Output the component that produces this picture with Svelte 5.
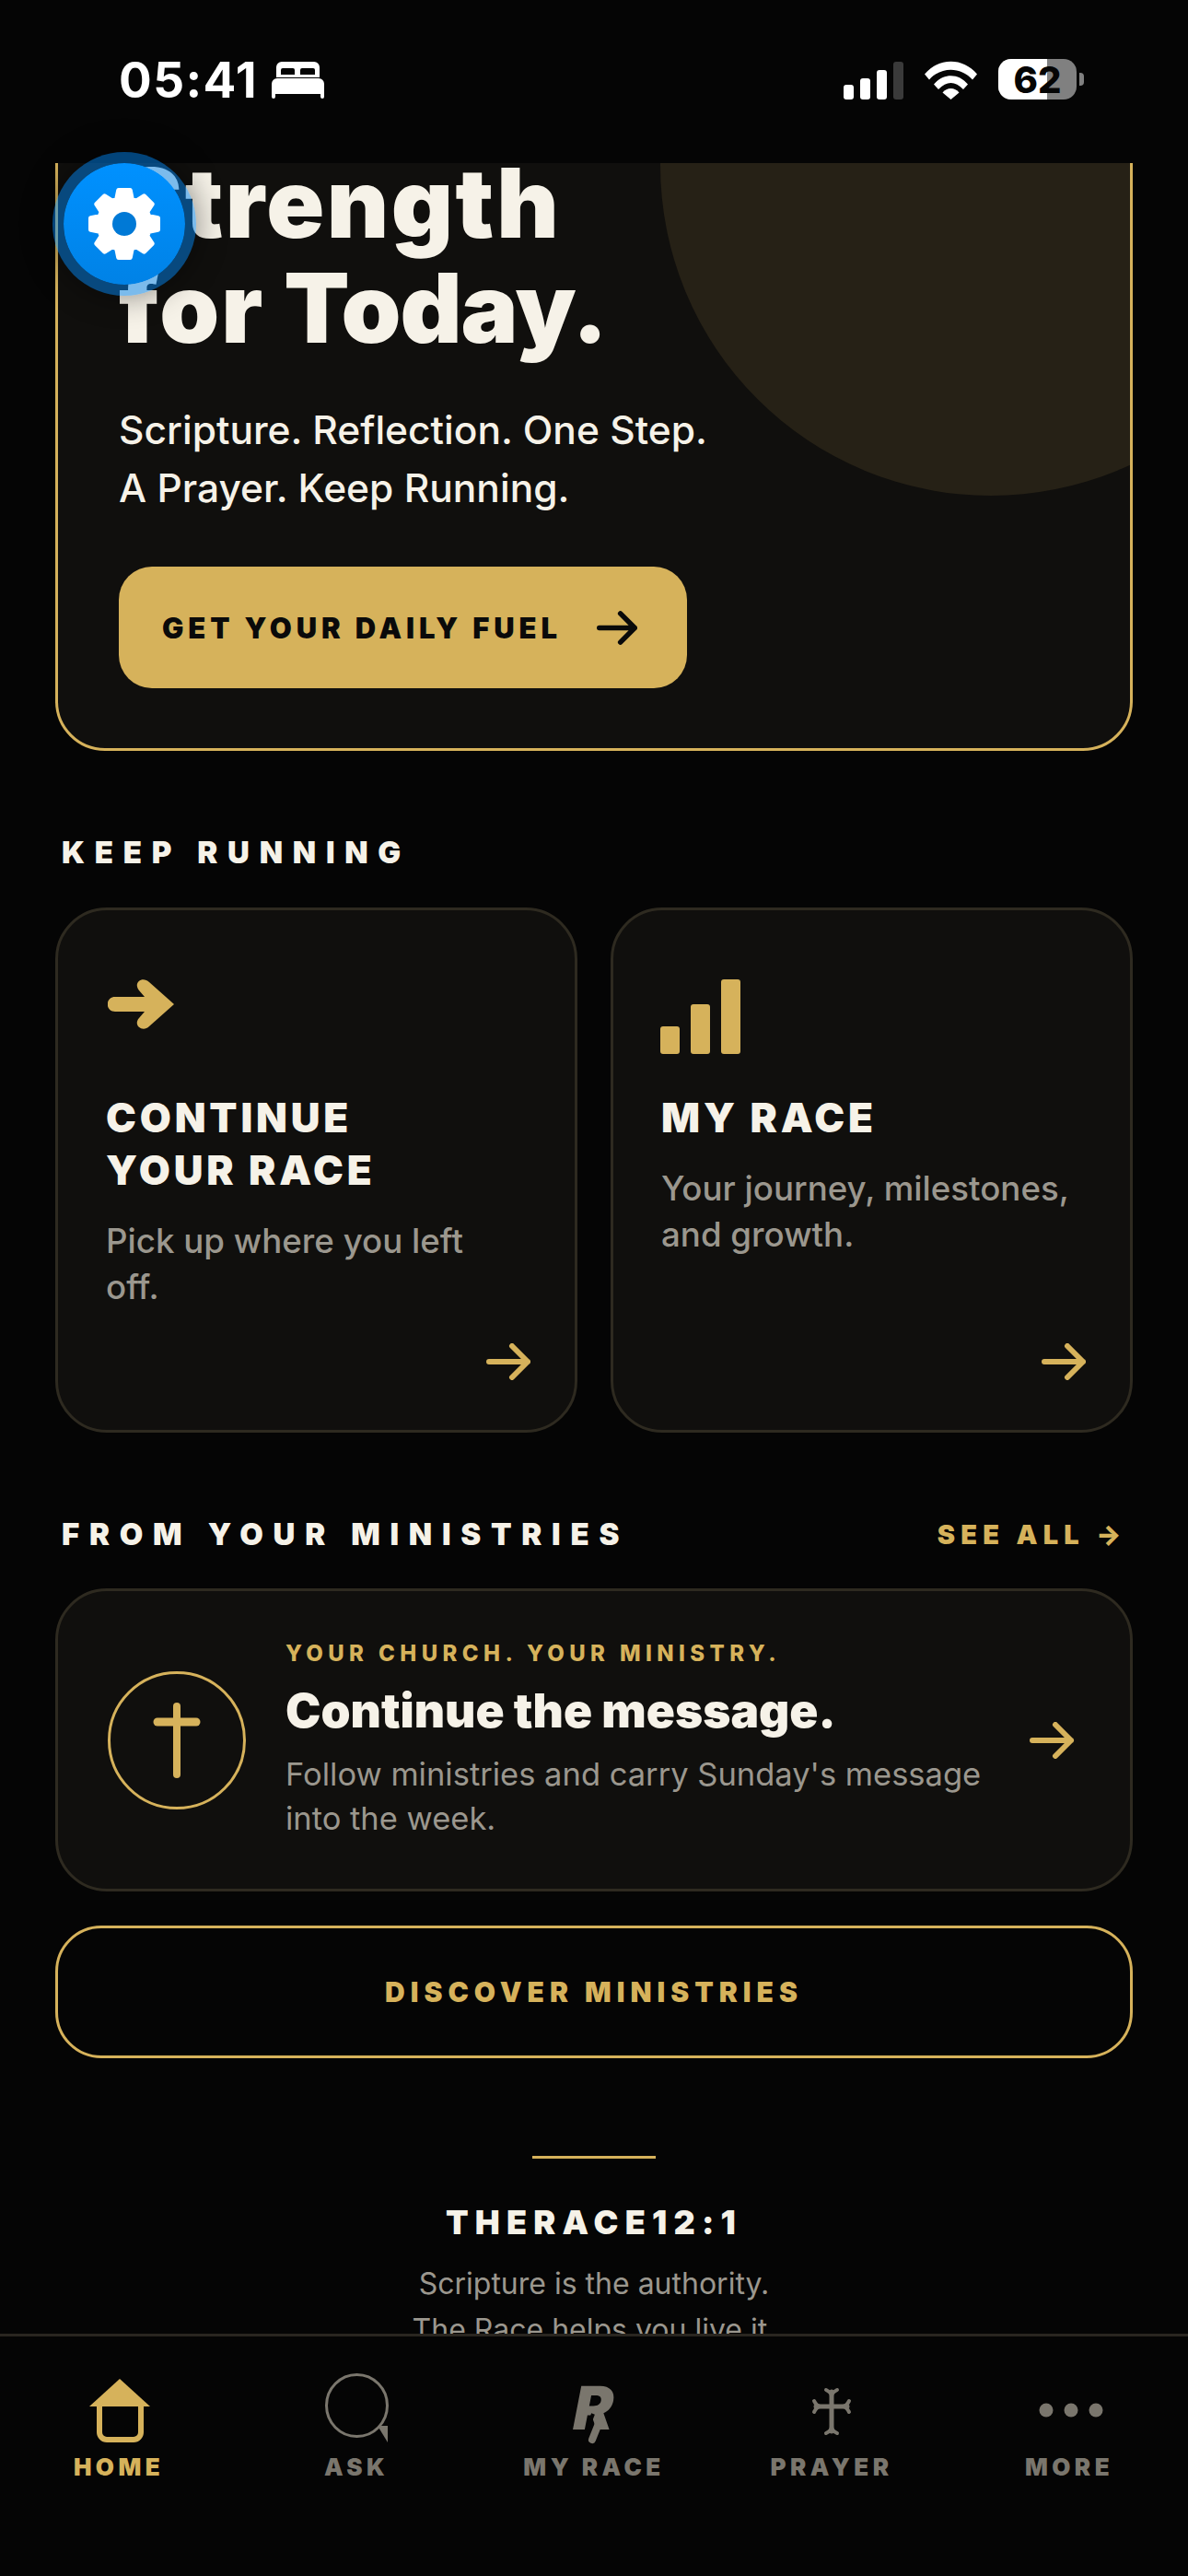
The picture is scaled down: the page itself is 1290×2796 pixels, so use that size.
<script lang="ts">
  const tabs = [
    { id: 'home', label: 'HOME', active: true },
    { id: 'ask', label: 'ASK' },
    { id: 'race', label: 'MY RACE' },
    { id: 'prayer', label: 'PRAYER' },
    { id: 'more', label: 'MORE' },
  ];

  // 8-tooth gear outline for the floating settings button
  function gearPath(cx: number, cy: number, outer: number, root: number): string {
    const pts: string[] = [];
    for (let i = 0; i < 8; i++) {
      const a = (i * Math.PI) / 4 - Math.PI / 2;
      const steps: [number, number][] = [
        [root, -0.3],
        [outer, -0.17],
        [outer, 0.17],
        [root, 0.3],
      ];
      for (const [r, d] of steps) {
        pts.push(`${(cx + r * Math.cos(a + d)).toFixed(1)} ${(cy + r * Math.sin(a + d)).toFixed(1)}`);
      }
    }
    return 'M' + pts.join('L') + 'Z';
  }
</script>

{#snippet arrow(cls: string)}
  <svg class={cls} viewBox="0 0 48 40" fill="none" stroke="currentColor" stroke-width="6" stroke-linecap="round" stroke-linejoin="round">
    <path d="M3 20H45M28 3l17 17-17 17" />
  </svg>
{/snippet}

<div class="phone">
  <header class="status">
    <div class="status-left">
      <span class="time">05:41</span>
      <svg class="bed" viewBox="0 0 57 40" fill="#fff">
        <path fill-rule="evenodd" d="M5 17V6a6 6 0 0 1 6-6h35a6 6 0 0 1 6 6v11H5ZM10 14h15V9a2 2 0 0 0-2-2H12a2 2 0 0 0-2 2ZM31 14h16V9a2 2 0 0 0-2-2H33a2 2 0 0 0-2 2Z" />
        <path d="M0 24a6 6 0 0 1 6-6h45a6 6 0 0 1 6 6v14a2 2 0 0 1-4 0v-3H4v3a2 2 0 0 1-4 0Z" />
      </svg>
    </div>
    <div class="status-right">
      <svg class="signal" viewBox="0 0 65 41">
        <rect x="0" y="25" width="11" height="16" rx="3" fill="#fff" />
        <rect x="18" y="18" width="11" height="23" rx="3" fill="#fff" />
        <rect x="36" y="9" width="11" height="32" rx="3" fill="#fff" />
        <rect x="54" y="0" width="11" height="41" rx="3" fill="#3a3a3a" />
      </svg>
      <svg class="wifi" viewBox="0 0 57 42" fill="#fff">
        <path d="M0 14.500C15-4 42-4 57 14.500L52 20.500C39 6 18 6 5 20.500Z" />
        <path d="M10 25.500C20 13 37 13 47 25.500L42 31C33 21.500 24 21.500 15 31Z" />
        <path d="M19.500 34.500C24 28.500 33 28.500 37.500 34.500L28.500 42Z" />
      </svg>
      <div class="battery">
        <div class="battery-body">
          <span class="battery-fill"></span>
          <span class="battery-num">62</span>
        </div>
        <span class="battery-cap"></span>
      </div>
    </div>
  </header>

  <main class="scroller">
    <section class="hero">
      <div class="hero-glow"></div>
      <h1><span class="wide">Strength</span><br /><span class="for">for</span> <span class="today">Today.</span></h1>
      <p class="hero-sub">Scripture. Reflection. One Step.<br />A Prayer. Keep Running.</p>
      <button class="hero-btn">
        <span>GET YOUR DAILY FUEL</span>
        {@render arrow('hero-arrow')}
      </button>
    </section>

    <h2 class="section-title keep">KEEP RUNNING</h2>
    <div class="cards">
      <article class="card">
        <svg class="card-icon" viewBox="0 0 72 54" fill="#d6b25b">
          <path d="M8 19H40L34 12C27 3 38-4 45 3L72 27 45 51C38 58 27 50 34 42L40 35H8C-3 35-3 19 8 19Z" />
        </svg>
        <h3>CONTINUE<br />YOUR RACE</h3>
        <p>Pick up where you left off.</p>
        {@render arrow('card-arrow')}
      </article>
      <article class="card">
        <svg class="card-icon bars" viewBox="0 0 87 81" fill="#d6b25b">
          <rect x="0" y="51" width="21" height="30" rx="3" />
          <rect x="33" y="27" width="21" height="54" rx="3" />
          <rect x="66" y="0" width="21" height="81" rx="3" />
        </svg>
        <h3>MY RACE</h3>
        <p>Your journey, milestones, and growth.</p>
        {@render arrow('card-arrow')}
      </article>
    </div>

    <div class="section-row">
      <h2 class="section-title">FROM YOUR MINISTRIES</h2>
      <span class="see-all">SEE ALL →</span>
    </div>
    <article class="ministry">
      <div class="cross-ring">
        <svg viewBox="0 0 52 82" fill="none" stroke="#d6b25b" stroke-linecap="round">
          <path d="M26 4V78" stroke-width="8" />
          <path d="M5 21H47" stroke-width="9" />
        </svg>
      </div>
      <div class="ministry-text">
        <span class="eyebrow">YOUR CHURCH. YOUR MINISTRY.</span>
        <h3>Continue the message.</h3>
        <p>Follow ministries and carry Sunday's message into the week.</p>
      </div>
      {@render arrow('ministry-arrow')}
    </article>
    <button class="discover">DISCOVER MINISTRIES</button>

    <footer class="foot">
      <span class="foot-rule"></span>
      <strong>THERACE12:1</strong>
      <p>Scripture is the authority.<br />The Race helps you live it.</p>
    </footer>
  </main>

  <nav class="tabbar">
    {#each tabs as tab (tab.id)}
      <div class="tab" class:active={tab.active}>
        <!-- every icon shares one 88x85 box so the glyphs line up with their labels -->
        <svg class="tab-icon" viewBox="0 0 88 85" fill="none">
          {#if tab.id === 'home'}
            <path d="M45 6L78 36H12Z" fill="currentColor" />
            <path d="M23 34V64a8 8 0 0 0 8 8H60a8 8 0 0 0 8-8V34" stroke="currentColor" stroke-width="6" />
          {:else if tab.id === 'ask'}
            <ellipse cx="44.500" cy="35" rx="33" ry="33.500" stroke="currentColor" stroke-width="3" />
            <path d="M67 57H78V75Z" fill="currentColor" />
          {:else if tab.id === 'race'}
            <text class="r-mark" transform="translate(18 61) skewX(-11)" fill="currentColor">R</text>
            <path d="M43 44L37 60" stroke="#050505" stroke-width="4" />
            <path d="M50 52L42 72" stroke="currentColor" stroke-width="8" stroke-linecap="round" />
          {:else if tab.id === 'prayer'}
            <g stroke="currentColor" stroke-linecap="round" stroke-linejoin="round">
              <path d="M44 20V63M27 36H61" stroke-width="5" />
              <path d="M38 18Q44 21 44 25Q44 21 50 18M38 65Q44 62 44 58Q44 62 50 65M25 30Q28 36 32 36Q28 36 25 42M63 30Q60 36 56 36Q60 36 63 42" stroke-width="4" />
            </g>
          {:else}
            <g fill="currentColor">
              <circle cx="19" cy="40" r="7.500" /><circle cx="46" cy="40" r="7.500" /><circle cx="73" cy="40" r="7.500" />
            </g>
          {/if}
        </svg>
        <span class="tab-label">{tab.label}</span>
      </div>
    {/each}
  </nav>

  <button class="fab" aria-label="Settings">
    <svg viewBox="0 0 84 84">
      <path d={gearPath(42, 42, 37, 28)} fill="#fff" stroke="#fff" stroke-width="5" stroke-linejoin="round" />
      <circle cx="42" cy="42" r="13" fill="#0079d6" />
    </svg>
  </button>
</div>

<style>
  :global(body) {
    background: #050505;
  }
  .phone {
    position: relative;
    width: 1290px;
    height: 2796px;
    display: flex;
    flex-direction: column;
    overflow: hidden;
    background: #050505;
    font-family: Inter, 'Liberation Sans', sans-serif;
    color: #f6f2e8;
  }

  /* status bar */
  .status {
    flex: 0 0 177px;
    box-sizing: border-box;
    padding: 64px 113px 0 129px;
    display: flex;
    justify-content: space-between;
    align-items: flex-start;
  }
  .status-left {
    display: flex;
    align-items: center;
    gap: 15px;
  }
  .time {
    font-size: 53px;
    line-height: 46px;
    font-weight: 700;
    letter-spacing: 1.4px;
    color: #fff;
  }
  .bed {
    width: 57px;
    height: 40px;
  }
  .status-right {
    display: flex;
    align-items: flex-end;
    height: 44px;
  }
  .signal {
    width: 65px;
    height: 41px;
    margin-right: 23px;
  }
  .wifi {
    width: 57px;
    height: 42px;
    margin-right: 23px;
  }
  .battery {
    display: flex;
    align-items: center;
    gap: 3px;
  }
  .battery-body {
    position: relative;
    width: 85px;
    height: 44px;
    border-radius: 14px;
    background: #808080;
    overflow: hidden;
    display: flex;
    align-items: center;
    justify-content: center;
  }
  .battery-fill {
    position: absolute;
    inset: 0 32px 0 0;
    background: #fff;
  }
  .battery-num {
    position: relative;
    font-size: 40px;
    font-weight: 800;
    color: #050505;
  }
  .battery-cap {
    width: 5px;
    height: 14px;
    border-radius: 0 4px 4px 0;
    background: #808080;
  }

  /* scrolled page content */
  .scroller {
    flex: 1;
    min-height: 0;
    overflow: hidden;
    padding: 0 60px;
  }
  .hero {
    position: relative;
    overflow: hidden;
    box-sizing: border-box;
    margin-top: -60px;
    height: 698px;
    padding: 43px 66px 0;
    border: 3px solid #d6b25b;
    border-radius: 54px;
    background: #100f0d;
  }
  .hero-glow {
    position: absolute;
    width: 718px;
    height: 718px;
    right: -208px;
    top: -300px;
    border-radius: 50%;
    background: #262116;
  }
  .hero h1 {
    position: relative;
    margin: 0;
    font-size: 104px;
    line-height: 114px;
    font-weight: 900;
    color: #f6f2e8;
  }
  .hero h1 .wide {
    letter-spacing: 2.500px;
  }
  .hero h1 .for {
    letter-spacing: 2px;
  }
  .hero h1 .today {
    letter-spacing: -1px;
  }
  .hero-sub {
    position: relative;
    margin: 44px 0 0;
    font-size: 42.500px;
    line-height: 63px;
    font-weight: 500;
  }
  .hero-btn {
    position: relative;
    display: flex;
    align-items: center;
    justify-content: space-between;
    margin-top: 54px;
    width: 617px;
    height: 132px;
    padding: 0 54px 0 47px;
    border: 0;
    border-radius: 36px;
    background: #d6b25b;
    color: #0a0a0a;
    font: 900 31px Inter, sans-serif;
    letter-spacing: 0.158em;
    white-space: nowrap;
  }
  :global(.hero-arrow) {
    width: 44px;
    height: 37px;
    flex: none;
  }

  .section-title {
    margin: 0;
    font-size: 33px;
    line-height: 40px;
    font-weight: 900;
    letter-spacing: 0.325em;
    color: #f6f2e8;
  }
  .keep {
    margin: 90px 0 40px 7px;
  }
  .cards {
    display: grid;
    grid-template-columns: 1fr 1fr;
    gap: 36px;
  }
  .card {
    position: relative;
    box-sizing: border-box;
    height: 570px;
    padding: 75px 52px 0;
    border: 3px solid #2e2a20;
    border-radius: 56px;
    background: #100f0d;
    color: #d6b25b;
  }
  .card-icon {
    display: block;
    width: 72px;
    height: 54px;
    margin-left: 2px;
  }
  .card-icon.bars {
    width: 87px;
    height: 81px;
    margin: 0 0 -27px -1px;
  }
  .card h3 {
    margin: 68px 0 0;
    font-size: 44px;
    line-height: 57px;
    font-weight: 900;
    letter-spacing: 0.087em;
    color: #f6f2e8;
  }
  .card p {
    margin: 23px 0 0;
    max-width: 448px;
    font-size: 36.700px;
    line-height: 50px;
    font-weight: 500;
    color: #9b978e;
  }
  :global(.card-arrow) {
    position: absolute;
    right: 48px;
    bottom: 54px;
    width: 48px;
    height: 40px;
  }

  .section-row {
    display: flex;
    justify-content: space-between;
    align-items: center;
    margin: 90px 6px 39px 7px;
  }
  .see-all {
    font-size: 29px;
    font-weight: 900;
    letter-spacing: 0.216em;
    color: #d6b25b;
  }
  .ministry {
    box-sizing: border-box;
    height: 329px;
    display: flex;
    align-items: center;
    padding: 0 60px 0 54px;
    border: 3px solid #2e2a20;
    border-radius: 56px;
    background: #100f0d;
    color: #d6b25b;
  }
  .cross-ring {
    flex: none;
    box-sizing: border-box;
    width: 150px;
    height: 150px;
    margin-right: 43px;
    display: flex;
    align-items: center;
    justify-content: center;
    border: 3px solid #d6b25b;
    border-radius: 50%;
  }
  .cross-ring svg {
    width: 52px;
    height: 82px;
  }
  .ministry-text {
    flex: 1;
    min-width: 0;
  }
  .eyebrow {
    display: block;
    font-size: 24px;
    line-height: 30px;
    font-weight: 800;
    letter-spacing: 0.225em;
  }
  .ministry h3 {
    margin: 15px 0 0;
    font-size: 51.400px;
    line-height: 62px;
    font-weight: 900;
    color: #f6f2e8;
  }
  .ministry p {
    margin: 15px 0 0;
    font-size: 34.500px;
    line-height: 48px;
    color: #9b978e;
    max-width: 780px;
  }
  :global(.ministry-arrow) {
    flex: none;
    width: 50px;
    height: 40px;
  }
  .discover {
    display: block;
    width: 100%;
    height: 144px;
    margin-top: 37px;
    border: 3px solid #d6b25b;
    border-radius: 50px;
    background: transparent;
    color: #d6b25b;
    font: 900 30px Inter, sans-serif;
    letter-spacing: 0.2em;
  }

  .foot {
    display: flex;
    flex-direction: column;
    align-items: center;
    margin-top: 106px;
    text-align: center;
  }
  .foot-rule {
    width: 134px;
    height: 3px;
    background: #d6b25b;
  }
  .foot strong {
    margin-top: 47px;
    font-size: 36px;
    line-height: 44px;
    font-weight: 900;
    letter-spacing: 0.2em;
  }
  .foot p {
    margin: 20px 0 0;
    font-size: 32px;
    line-height: 50px;
    color: #9b978e;
  }

  /* bottom nav */
  .tabbar {
    flex: 0 0 263px;
    box-sizing: border-box;
    display: grid;
    grid-template-columns: repeat(5, 1fr);
    border-top: 3px solid #2a2620;
    background: #050505;
  }
  .tab {
    display: flex;
    flex-direction: column;
    align-items: center;
    color: #7a766d;
  }
  .tab.active {
    color: #d6b25b;
  }
  .tab-icon {
    width: 88px;
    height: 85px;
    margin-top: 40px;
    overflow: visible;
  }
  .tab-label {
    margin-top: 1px;
    font-size: 26px;
    line-height: 32px;
    font-weight: 900;
    letter-spacing: 0.17em;
  }
  .r-mark {
    font-family: Inter, sans-serif;
    font-size: 65px;
    font-weight: 900;
  }

  /* floating settings button */
  .fab {
    position: absolute;
    left: 57px;
    top: 165px;
    box-sizing: border-box;
    width: 156px;
    height: 156px;
    padding: 0;
    display: flex;
    align-items: center;
    justify-content: center;
    border: 12px solid rgba(0, 132, 240, 0.5);
    border-radius: 50%;
    background: linear-gradient(#0091ff, #0082e6) padding-box;
    box-shadow: 0 0 34px rgba(0, 0, 0, 0.45);
  }
  .fab svg {
    width: 84px;
    height: 84px;
  }
</style>
